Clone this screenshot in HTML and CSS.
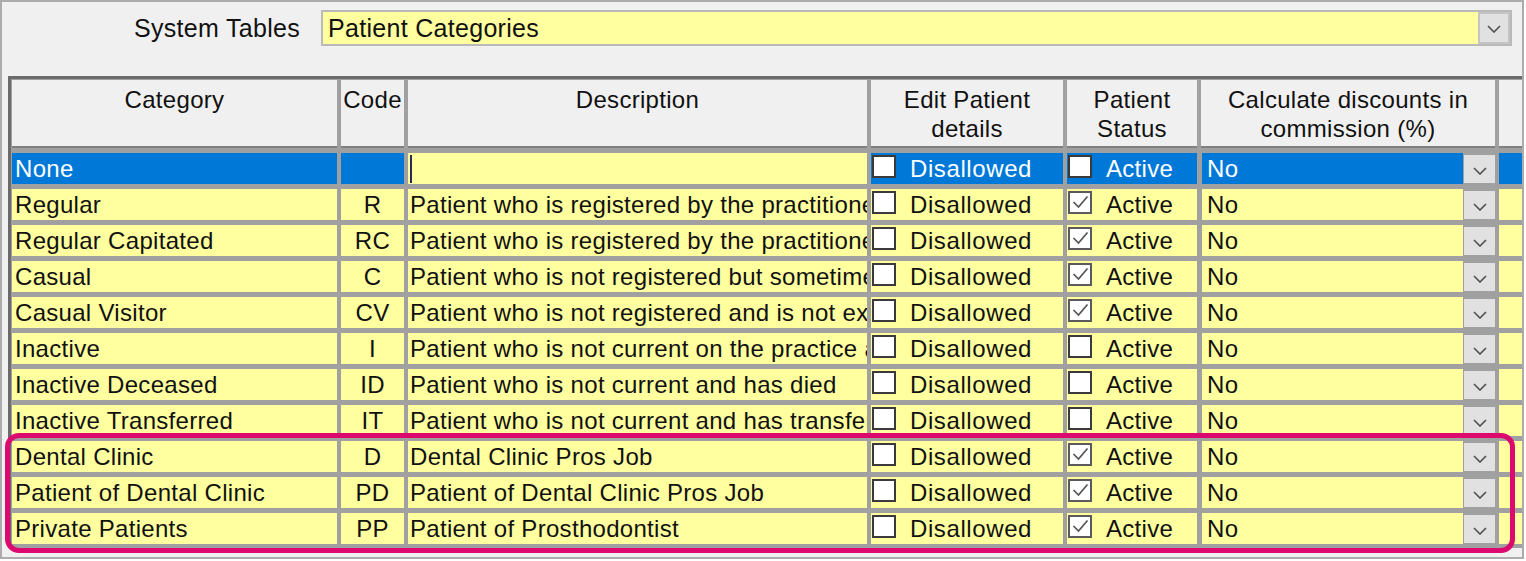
FILE: index.html
```html
<!DOCTYPE html>
<html>
<head>
<meta charset="utf-8">
<link rel="stylesheet" href="styles.css">
</head>
<body>
<div class="window">
  <div class="toolbar">
    <span class="label">System Tables</span>
    <div class="combo">
      <span class="combo-text">Patient Categories</span>
      <span class="combo-btn"><svg width="14" height="8" viewBox="0 0 14 8"><polyline points="1,1 7,7 13,1" fill="none" stroke="#505050" stroke-width="1.6"/></svg></span>
    </div>
  </div>
  <div class="frame">
    <div class="grid">
      <div class="hd">Category</div>
      <div class="hd">Code</div>
      <div class="hd">Description</div>
      <div class="hd">Edit Patient<br>details</div>
      <div class="hd">Patient<br>Status</div>
      <div class="hd">Calculate discounts in<br>commission (%)</div>
      <div class="hd"></div>

      <div class="c sel">None</div>
      <div class="c code sel"></div>
      <div class="c desc"><span class="caret"></span></div>
      <div class="c chk sel"><span class="box"></span><span class="lbl">Disallowed</span></div>
      <div class="c chk sel"><span class="box"></span><span class="lbl2">Active</span></div>
      <div class="c calc sel"><span class="val">No</span><span class="dd"><svg width="14" height="8" viewBox="0 0 14 8"><polyline points="1,1 7,7 13,1" fill="none" stroke="#505050" stroke-width="1.6"/></svg></span></div>
      <div class="c sel"></div>

      <div class="c">Regular</div>
      <div class="c code">R</div>
      <div class="c desc">Patient who is registered by the practitioner</div>
      <div class="c chk"><span class="box"></span><span class="lbl">Disallowed</span></div>
      <div class="c chk"><span class="box on"><svg width="19" height="19" viewBox="0 0 19 19"><polyline points="2.5,9 7.5,14 16.5,3.5" fill="none" stroke="#555" stroke-width="1.7"/></svg></span><span class="lbl2">Active</span></div>
      <div class="c calc"><span class="val">No</span><span class="dd"><svg width="14" height="8" viewBox="0 0 14 8"><polyline points="1,1 7,7 13,1" fill="none" stroke="#505050" stroke-width="1.6"/></svg></span></div>
      <div class="c"></div>

      <div class="c">Regular Capitated</div>
      <div class="c code">RC</div>
      <div class="c desc">Patient who is registered by the practitioner and capitated</div>
      <div class="c chk"><span class="box"></span><span class="lbl">Disallowed</span></div>
      <div class="c chk"><span class="box on"><svg width="19" height="19" viewBox="0 0 19 19"><polyline points="2.5,9 7.5,14 16.5,3.5" fill="none" stroke="#555" stroke-width="1.7"/></svg></span><span class="lbl2">Active</span></div>
      <div class="c calc"><span class="val">No</span><span class="dd"><svg width="14" height="8" viewBox="0 0 14 8"><polyline points="1,1 7,7 13,1" fill="none" stroke="#505050" stroke-width="1.6"/></svg></span></div>
      <div class="c"></div>

      <div class="c">Casual</div>
      <div class="c code">C</div>
      <div class="c desc">Patient who is not registered but sometimes visits</div>
      <div class="c chk"><span class="box"></span><span class="lbl">Disallowed</span></div>
      <div class="c chk"><span class="box on"><svg width="19" height="19" viewBox="0 0 19 19"><polyline points="2.5,9 7.5,14 16.5,3.5" fill="none" stroke="#555" stroke-width="1.7"/></svg></span><span class="lbl2">Active</span></div>
      <div class="c calc"><span class="val">No</span><span class="dd"><svg width="14" height="8" viewBox="0 0 14 8"><polyline points="1,1 7,7 13,1" fill="none" stroke="#505050" stroke-width="1.6"/></svg></span></div>
      <div class="c"></div>

      <div class="c">Casual Visitor</div>
      <div class="c code">CV</div>
      <div class="c desc">Patient who is not registered and is not expected to return</div>
      <div class="c chk"><span class="box"></span><span class="lbl">Disallowed</span></div>
      <div class="c chk"><span class="box on"><svg width="19" height="19" viewBox="0 0 19 19"><polyline points="2.5,9 7.5,14 16.5,3.5" fill="none" stroke="#555" stroke-width="1.7"/></svg></span><span class="lbl2">Active</span></div>
      <div class="c calc"><span class="val">No</span><span class="dd"><svg width="14" height="8" viewBox="0 0 14 8"><polyline points="1,1 7,7 13,1" fill="none" stroke="#505050" stroke-width="1.6"/></svg></span></div>
      <div class="c"></div>

      <div class="c">Inactive</div>
      <div class="c code">I</div>
      <div class="c desc">Patient who is not current on the practice at all</div>
      <div class="c chk"><span class="box"></span><span class="lbl">Disallowed</span></div>
      <div class="c chk"><span class="box"></span><span class="lbl2">Active</span></div>
      <div class="c calc"><span class="val">No</span><span class="dd"><svg width="14" height="8" viewBox="0 0 14 8"><polyline points="1,1 7,7 13,1" fill="none" stroke="#505050" stroke-width="1.6"/></svg></span></div>
      <div class="c"></div>

      <div class="c">Inactive Deceased</div>
      <div class="c code">ID</div>
      <div class="c desc">Patient who is not current and has died</div>
      <div class="c chk"><span class="box"></span><span class="lbl">Disallowed</span></div>
      <div class="c chk"><span class="box"></span><span class="lbl2">Active</span></div>
      <div class="c calc"><span class="val">No</span><span class="dd"><svg width="14" height="8" viewBox="0 0 14 8"><polyline points="1,1 7,7 13,1" fill="none" stroke="#505050" stroke-width="1.6"/></svg></span></div>
      <div class="c"></div>

      <div class="c">Inactive Transferred</div>
      <div class="c code">IT</div>
      <div class="c desc">Patient who is not current and has transferred</div>
      <div class="c chk"><span class="box"></span><span class="lbl">Disallowed</span></div>
      <div class="c chk"><span class="box"></span><span class="lbl2">Active</span></div>
      <div class="c calc"><span class="val">No</span><span class="dd"><svg width="14" height="8" viewBox="0 0 14 8"><polyline points="1,1 7,7 13,1" fill="none" stroke="#505050" stroke-width="1.6"/></svg></span></div>
      <div class="c"></div>

      <div class="c">Dental Clinic</div>
      <div class="c code">D</div>
      <div class="c desc">Dental Clinic Pros Job</div>
      <div class="c chk"><span class="box"></span><span class="lbl">Disallowed</span></div>
      <div class="c chk"><span class="box on"><svg width="19" height="19" viewBox="0 0 19 19"><polyline points="2.5,9 7.5,14 16.5,3.5" fill="none" stroke="#555" stroke-width="1.7"/></svg></span><span class="lbl2">Active</span></div>
      <div class="c calc"><span class="val">No</span><span class="dd"><svg width="14" height="8" viewBox="0 0 14 8"><polyline points="1,1 7,7 13,1" fill="none" stroke="#505050" stroke-width="1.6"/></svg></span></div>
      <div class="c"></div>

      <div class="c">Patient of Dental Clinic</div>
      <div class="c code">PD</div>
      <div class="c desc">Patient of Dental Clinic Pros Job</div>
      <div class="c chk"><span class="box"></span><span class="lbl">Disallowed</span></div>
      <div class="c chk"><span class="box on"><svg width="19" height="19" viewBox="0 0 19 19"><polyline points="2.5,9 7.5,14 16.5,3.5" fill="none" stroke="#555" stroke-width="1.7"/></svg></span><span class="lbl2">Active</span></div>
      <div class="c calc"><span class="val">No</span><span class="dd"><svg width="14" height="8" viewBox="0 0 14 8"><polyline points="1,1 7,7 13,1" fill="none" stroke="#505050" stroke-width="1.6"/></svg></span></div>
      <div class="c"></div>

      <div class="c">Private Patients</div>
      <div class="c code">PP</div>
      <div class="c desc">Patient of Prosthodontist</div>
      <div class="c chk"><span class="box"></span><span class="lbl">Disallowed</span></div>
      <div class="c chk"><span class="box on"><svg width="19" height="19" viewBox="0 0 19 19"><polyline points="2.5,9 7.5,14 16.5,3.5" fill="none" stroke="#555" stroke-width="1.7"/></svg></span><span class="lbl2">Active</span></div>
      <div class="c calc"><span class="val">No</span><span class="dd"><svg width="14" height="8" viewBox="0 0 14 8"><polyline points="1,1 7,7 13,1" fill="none" stroke="#505050" stroke-width="1.6"/></svg></span></div>
      <div class="c"></div>
    </div>
  </div>
  <div class="highlight"></div>
</div>
</body>
</html>
```

FILE: styles.css
```css
html, body {
  margin: 0;
  padding: 0;
  background: #ffffff;
}

body {
  font-family: "Liberation Sans", Arial, sans-serif;
  font-size: 24px;
  letter-spacing: 0.3px;
  color: #111111;
}

.window {
  position: relative;
  box-sizing: border-box;
  width: 1524px;
  height: 559px;
  border: 2px solid #acacac;
  background: #f0f0f0;
  overflow: hidden;
}

.toolbar {
  display: flex;
  align-items: center;
  padding-top: 8px;
  height: 36px;
  font-size: 25px;
}

.label {
  width: 298px;
  text-align: right;
  margin-right: 21px;
  color: #111111;
}

.combo {
  flex: 1;
  display: flex;
  align-items: stretch;
  height: 36px;
  box-sizing: border-box;
  border: 2px solid #b9b9b9;
  margin-right: 10px;
  background: #ffff9f;
}

.combo-text {
  flex: 1;
  line-height: 33px;
  padding-left: 5px;
}

.combo-btn {
  width: 32px;
  background: #e1e1e1;
  border: 2px solid #c4c4c4;
  display: flex;
  align-items: center;
  justify-content: center;
  padding-top: 2px;
  box-sizing: border-box;
}

.frame {
  margin: 30px 0 0 6px;
  border-top: 3px solid #6b6b6b;
  border-left: 3px solid #6b6b6b;
  padding: 1px 0 4px 1px;
  background: #a0a0a0;
  overflow: hidden;
}

.grid {
  display: grid;
  grid-template-columns: 325px 63px 459px 192px 130px 294px 40px;
  grid-template-rows: 68px;
  grid-auto-rows: 31px;
  column-gap: 4px;
  row-gap: 5px;
  width: 1527px;
}

.hd {
  background: #f0f0f0;
  text-align: center;
  line-height: 29px;
  padding-top: 5px;
  box-sizing: border-box;
  border-bottom: 2px solid #808080;
  color: #111111;
  white-space: nowrap;
  overflow: hidden;
}

.c {
  background: #ffff9f;
  line-height: 32px;
  padding-left: 3px;
  white-space: nowrap;
  overflow: hidden;
  color: #111111;
}

.c.sel {
  background: #0078d7;
  color: #ffffff;
}

.code {
  text-align: center;
  padding-left: 0;
}

.desc {
  padding-left: 2px;
}

.caret {
  display: inline-block;
  width: 2px;
  height: 28px;
  background: #2a2a5a;
  vertical-align: middle;
  margin-top: -3px;
}

.chk {
  display: flex;
  align-items: flex-start;
  padding-left: 1px;
}

.box {
  width: 24px;
  height: 23px;
  margin-top: 2px;
  box-sizing: border-box;
  border: 2px solid #3a3a3a;
  background: #ffffff;
  flex: none;
  display: flex;
  align-items: center;
  justify-content: center;
}

.box.on {
  border-color: #5a5a5a;
}

.lbl {
  margin-left: 14px;
  letter-spacing: 0.6px;
}

.lbl2 {
  margin-left: 14px;
}

.calc {
  display: flex;
  padding-left: 0;
  background: #a0a0a0;
}

.calc .val {
  flex: 1;
  background: #ffff9f;
  padding-left: 5px;
  margin-left: 1px;
}

.calc.sel {
  background: #a0a0a0;
}

.calc.sel .val {
  background: #0078d7;
  color: #ffffff;
}

.dd {
  width: 31px;
  height: 28px;
  margin-top: 2px;
  margin-left: 1px;
  background: #e1e1e1;
  display: flex;
  align-items: center;
  justify-content: center;
  padding-top: 4px;
  box-sizing: border-box;
}

.highlight {
  position: absolute;
  left: 3px;
  top: 431px;
  width: 1510px;
  height: 120px;
  box-sizing: border-box;
  border: 5px solid #dc0a6e;
  border-radius: 14px;
  pointer-events: none;
}
```
